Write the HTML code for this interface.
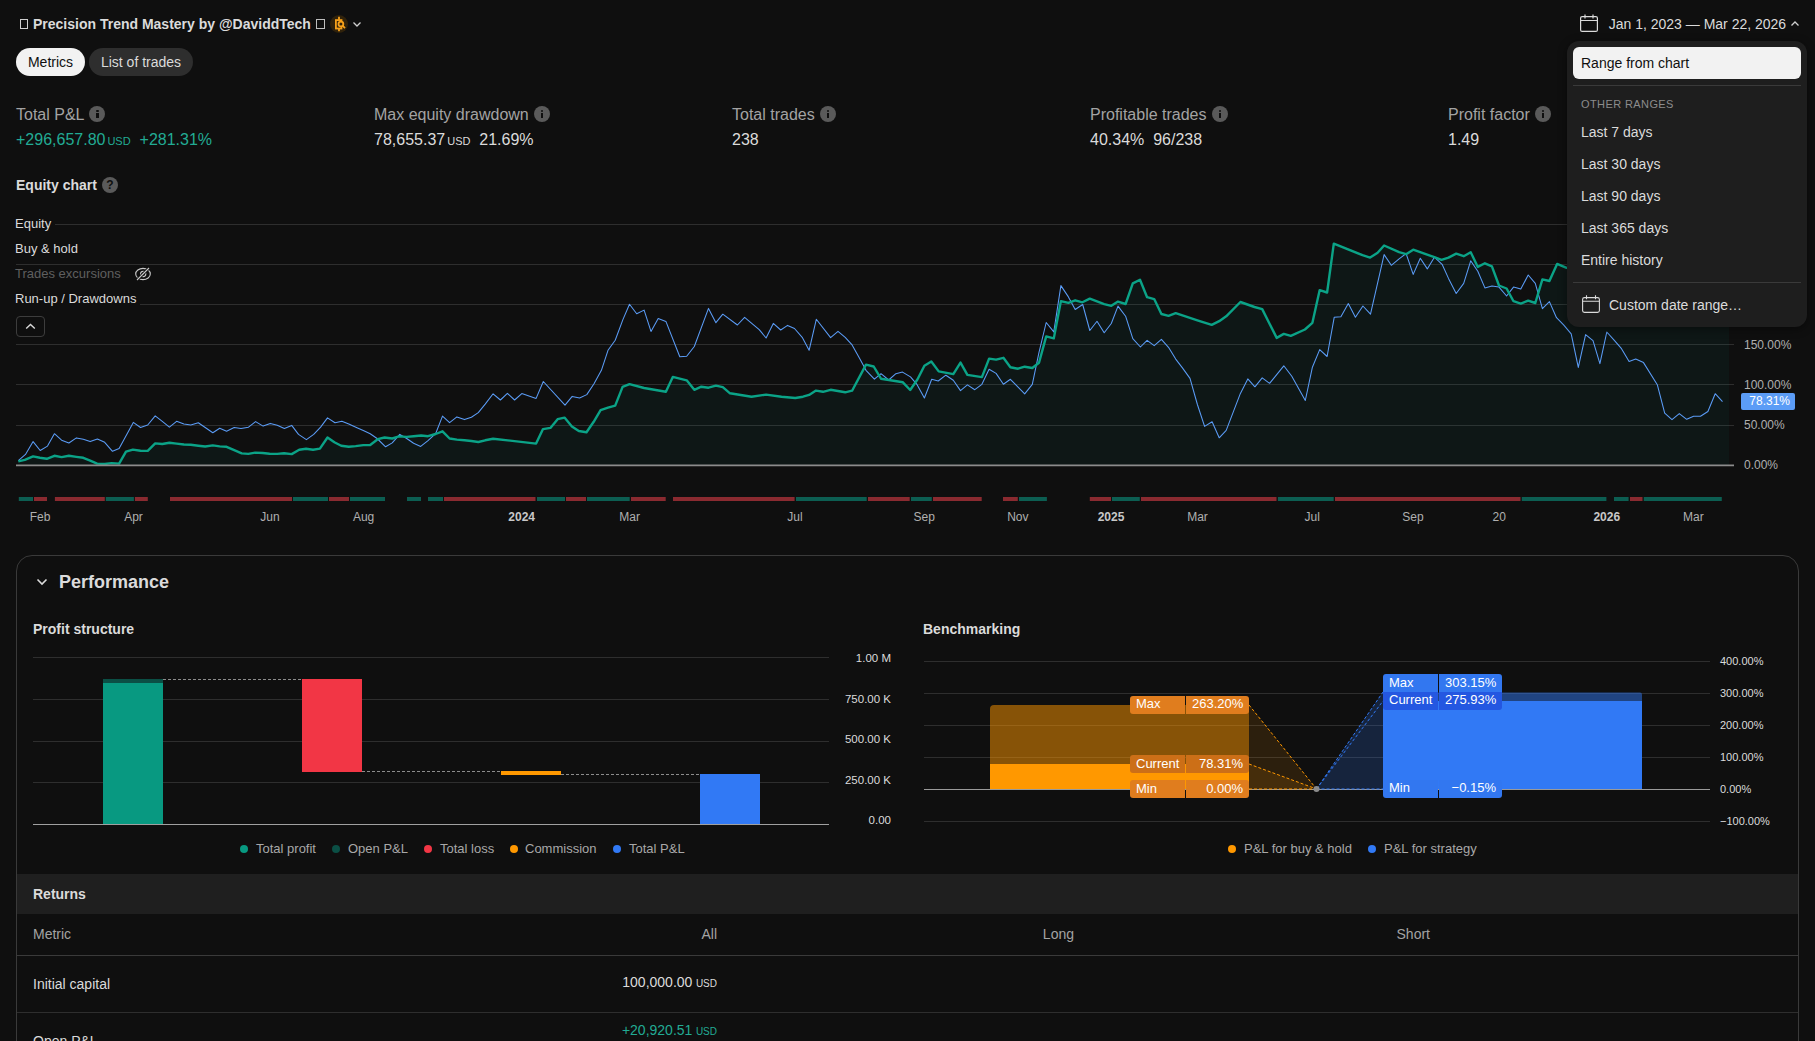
<!DOCTYPE html>
<html><head><meta charset="utf-8">
<style>
*{box-sizing:border-box;margin:0;padding:0}
html,body{width:1815px;height:1041px;overflow:hidden;background:#0f0f0f;font-family:"Liberation Sans",sans-serif;color:#dbdbdb}
.a{position:absolute;white-space:nowrap}
.xl{position:absolute;top:510px;width:80px;text-align:center;font-size:12px;line-height:15px}
.ml{position:absolute;top:105px;font-size:16px;line-height:20px;color:#a3a3a3}
.mv{position:absolute;top:130px;font-size:16px;line-height:20px;color:#dbdbdb}
.usd{font-size:11px;margin-left:2px}
.info{display:inline-block;width:16px;height:16px;border-radius:50%;background:#5a5a5a;vertical-align:-2px;margin-left:5px;position:relative}
.info:before{content:"";position:absolute;left:7px;top:7px;width:2.4px;height:5px;background:#0f0f0f}
.info:after{content:"";position:absolute;left:7px;top:3.5px;width:2.4px;height:2.4px;background:#0f0f0f;border-radius:50%}
.leg{position:absolute;left:15px;font-size:13px;line-height:16px;background:#0f0f0f;padding-right:4px}
.yl{position:absolute;left:1744px;font-size:12px;line-height:14px;color:#b0b0b0}
.dd{position:absolute;left:1567px;top:41px;width:240px;height:286px;background:#1e1e1e;border-radius:12px;box-shadow:0 2px 10px rgba(0,0,0,0.45)}
.di{position:absolute;left:14px;font-size:14px;line-height:18px;color:#dbdbdb}
.pl{position:absolute;font-size:11.5px;line-height:13px;color:#dbdbdb;text-align:right;width:80px}
.lg{position:absolute;top:841px;font-size:13px;line-height:15px;color:#a8a8a8}
.dot{position:absolute;top:845px;width:8px;height:8px;border-radius:50%}
.bl{position:absolute;font-size:13px;line-height:17px;color:#fff;height:17.5px;padding:0 6px}
.bll{position:absolute;left:1720px;font-size:11px;line-height:13px;color:#dbdbdb}
</style></head><body>
<!-- header -->
<div class="a" style="left:20px;top:19px;width:8px;height:10px;border:1px solid #cfcfcf"></div>
<div class="a" style="left:33px;top:16px;font-size:14px;line-height:17px;font-weight:700;color:#dbdbdb">Precision Trend Mastery by @DaviddTech</div>
<div class="a" style="left:316px;top:19px;width:9px;height:10px;border:1px solid #bdbdbd"></div>
<div class="a" style="left:330px;top:15px;width:18px;height:18px;border-radius:50%;background:#30220b"></div>
<svg class="a" style="left:330px;top:15px" width="18" height="18" viewBox="0 0 18 18"><g fill="none" stroke="#f7a11a" stroke-width="1.8"><path d="M9 1.8v3M9 14v2.2"/><rect x="5.9" y="5.1" width="5.6" height="8.4"/><circle cx="10.9" cy="9" r="2.4" fill="#30220b"/><path d="M12.6 10.7l2.4 2.4"/></g></svg>
<svg class="a" style="left:352px;top:19px" width="10" height="10" viewBox="0 0 10 10"><path d="M1.5 3.5l3.5 3.5 3.5-3.5" fill="none" stroke="#cfcfcf" stroke-width="1.3"/></svg>

<div class="a" style="left:16px;top:48px;width:69px;height:28px;border-radius:14px;background:#f2f2f2;color:#0f0f0f;font-size:14px;line-height:28px;text-align:center">Metrics</div>
<div class="a" style="left:89px;top:48px;width:104px;height:28px;border-radius:14px;background:#2e2e2e;color:#dbdbdb;font-size:14px;line-height:28px;text-align:center">List of trades</div>

<!-- date range -->
<svg class="a" style="left:1580px;top:14px" width="18" height="18" viewBox="0 0 18 18"><g fill="none" stroke="#dbdbdb" stroke-width="1.2"><rect x="0.6" y="2.6" width="16.8" height="14.8" rx="1.5"/><path d="M0.6 6.5h16.8M5 0.5v4M13 0.5v4"/></g></svg>
<div class="a" style="left:1608.7px;top:16px;font-size:14px;line-height:17px;color:#dbdbdb">Jan 1, 2023 — Mar 22, 2026</div>
<svg class="a" style="left:1789.7px;top:19px" width="10" height="10" viewBox="0 0 10 10"><path d="M1.5 6.5l3.5-3.5 3.5 3.5" fill="none" stroke="#cfcfcf" stroke-width="1.3"/></svg>

<!-- metrics -->
<div class="ml" style="left:16px">Total P&amp;L<span class="info"></span></div>
<div class="mv" style="left:16px;color:#22ab94">+296,657.80<span class="usd">USD</span>&nbsp;&nbsp;+281.31%</div>
<div class="ml" style="left:374px">Max equity drawdown<span class="info"></span></div>
<div class="mv" style="left:374px">78,655.37<span class="usd">USD</span>&nbsp;&nbsp;21.69%</div>
<div class="ml" style="left:732px">Total trades<span class="info"></span></div>
<div class="mv" style="left:732px">238</div>
<div class="ml" style="left:1090px">Profitable trades<span class="info"></span></div>
<div class="mv" style="left:1090px">40.34%&nbsp;&nbsp;96/238</div>
<div class="ml" style="left:1448px">Profit factor<span class="info"></span></div>
<div class="mv" style="left:1448px">1.49</div>

<div class="a" style="left:16px;top:177px;font-size:14px;line-height:17px;font-weight:700;color:#dbdbdb">Equity chart</div>
<div class="a" style="left:102px;top:177px;width:16px;height:16px;border-radius:50%;background:#5a5a5a;color:#0f0f0f;font-size:12px;font-weight:700;line-height:16px;text-align:center">?</div>

<!-- equity chart -->
<svg width="1815" height="540" style="position:absolute;left:0;top:0">
<line x1="16" y1="224.5" x2="1734" y2="224.5" stroke="#2e2e2e" stroke-width="1"/>
<line x1="16" y1="264.5" x2="1734" y2="264.5" stroke="#2e2e2e" stroke-width="1"/>
<line x1="16" y1="304.5" x2="1734" y2="304.5" stroke="#2e2e2e" stroke-width="1"/>
<line x1="16" y1="344.5" x2="1734" y2="344.5" stroke="#2e2e2e" stroke-width="1"/>
<line x1="16" y1="384.5" x2="1734" y2="384.5" stroke="#2e2e2e" stroke-width="1"/>
<line x1="16" y1="425.5" x2="1734" y2="425.5" stroke="#2e2e2e" stroke-width="1"/>
<polygon points="18.3,465.0 18.3,461.3 24.8,459.9 33.1,456.4 39.9,457.8 46.8,458.8 54.4,455.8 61.6,457.1 68.9,455.8 76.4,456.9 83.3,457.8 90.2,460.6 97.1,463.6 104.7,464.0 111.6,463.1 119.1,463.6 126.0,451.6 132.9,449.6 140.5,450.7 147.7,450.9 155.2,443.4 162.3,444.0 169.4,442.7 176.6,443.6 183.9,444.5 190.8,444.7 198.3,445.7 205.2,446.5 212.8,445.4 219.7,446.4 226.6,446.8 234.2,450.2 241.7,453.4 248.3,453.9 255.2,452.6 262.7,453.0 269.6,453.7 277.2,453.9 284.1,453.3 291.7,454.1 299.2,449.8 306.1,448.8 313.0,449.8 319.9,448.6 327.5,437.5 334.4,442.2 341.2,445.7 348.8,446.8 355.7,446.1 363.3,445.1 370.2,445.0 377.7,439.2 384.6,437.5 392.2,438.5 399.1,436.4 406.7,436.9 413.6,436.2 421.1,435.5 428.0,436.2 435.6,434.0 442.5,431.3 449.6,438.5 456.9,439.6 464.5,440.2 471.4,441.0 478.3,442.0 485.2,440.3 493.1,438.7 536.1,443.6 543.0,429.1 550.4,427.9 557.6,419.2 564.5,417.6 571.9,426.4 578.8,431.0 586.5,432.2 593.7,421.8 600.6,410.2 608.0,407.6 615.2,405.6 622.6,386.9 629.5,384.1 644.1,388.0 665.9,391.8 672.8,376.9 686.7,380.3 694.3,389.8 701.3,386.7 708.5,387.7 715.9,385.7 722.8,387.2 730.0,393.3 751.5,396.7 766.1,394.6 781.5,396.7 795.3,398.0 803.0,396.7 809.1,394.9 816.0,390.6 823.0,391.8 830.6,389.8 845.2,392.3 852.1,390.7 866.0,364.6 873.7,366.5 881.0,378.7 902.9,382.3 910.2,390.0 917.4,379.5 924.4,365.7 931.3,361.5 938.7,371.4 953.3,374.1 960.5,362.6 967.4,374.9 981.9,377.1 989.1,358.6 996.1,359.6 1003.4,357.8 1010.4,367.2 1018.0,368.7 1024.7,366.7 1032.3,368.0 1039.0,362.8 1046.2,336.4 1053.8,338.4 1060.9,301.1 1068.4,302.8 1075.2,300.3 1082.4,302.3 1089.8,298.6 1104.2,304.1 1111.3,305.8 1118.0,301.6 1125.6,304.0 1132.8,283.4 1140.0,279.8 1147.1,297.2 1154.2,299.1 1161.4,314.0 1168.5,315.9 1175.7,313.2 1197.4,320.4 1211.7,324.8 1219.2,321.2 1226.2,316.3 1240.4,302.0 1254.5,307.0 1262.2,309.1 1276.7,337.9 1283.8,333.9 1290.8,335.9 1304.9,329.5 1312.4,322.8 1319.7,290.1 1327.1,292.5 1333.8,243.7 1362.5,255.2 1370.1,257.6 1377.6,252.8 1384.1,245.5 1399.1,252.2 1406.1,254.2 1413.2,249.7 1434.4,257.2 1441.5,259.8 1448.5,257.6 1456.2,253.6 1463.7,256.2 1470.7,252.2 1477.8,266.9 1484.9,263.3 1491.9,266.3 1499.0,285.5 1506.6,288.5 1513.5,301.2 1520.8,303.6 1528.2,300.6 1535.3,303.0 1542.4,279.4 1549.4,281.0 1557.1,263.9 1566.6,267.9 1580.0,270.0 1620.0,258.0 1660.0,252.0 1700.0,246.0 1722.5,240.0 1729.0,240.0 1729.0,465.0" fill="#089981" fill-opacity="0.06"/>
<polyline points="18.3,460.6 25.5,454.4 33.1,441.6 40.2,450.5 47.5,446.1 54.4,433.7 61.6,440.2 68.9,443.0 76.4,437.9 83.3,439.2 90.2,441.6 97.4,439.0 104.7,442.3 112.5,451.3 119.1,448.5 133.3,422.4 140.5,427.5 147.7,425.0 155.2,415.8 162.3,421.3 169.4,427.1 176.6,421.3 183.9,424.1 190.8,425.0 198.3,422.7 205.2,427.5 212.8,432.8 219.7,428.2 226.6,431.2 234.2,427.5 241.0,428.5 248.5,427.2 255.6,421.6 263.1,426.1 270.3,423.4 277.2,425.2 284.4,428.5 291.7,425.4 298.5,434.4 306.4,439.6 313.7,434.4 320.6,427.1 327.5,417.9 335.0,422.7 341.9,421.3 348.8,424.0 356.4,427.5 363.3,430.5 370.2,433.7 377.1,438.5 385.6,446.8 392.2,442.9 399.8,434.4 406.7,438.5 413.6,443.3 420.7,446.4 428.0,440.6 435.6,433.7 442.5,416.1 449.6,422.7 456.9,416.9 464.5,419.6 471.4,417.2 478.3,412.6 485.2,404.1 493.1,393.8 500.4,400.0 507.4,393.3 514.6,400.0 521.8,393.6 536.1,398.4 543.3,381.5 565.0,405.2 572.2,396.4 579.6,398.0 586.8,394.6 594.0,383.8 601.4,370.3 608.0,350.3 615.2,340.3 622.9,319.6 629.5,304.2 636.7,313.7 644.1,310.1 651.0,331.4 658.2,318.5 665.9,321.4 679.8,356.8 686.7,356.2 694.3,346.5 708.5,308.4 715.9,322.7 722.8,314.2 737.4,325.0 744.6,317.3 759.2,329.6 766.1,338.0 773.3,323.4 780.7,330.0 787.6,325.4 794.5,328.5 802.2,337.3 809.1,350.3 816.3,319.3 830.6,337.6 838.0,331.4 845.2,337.3 852.1,344.9 859.8,358.8 866.0,370.3 874.4,379.2 881.0,373.7 888.7,380.0 895.9,373.7 902.5,372.1 910.5,376.9 916.7,384.1 924.4,398.0 931.7,379.2 938.2,381.0 945.9,375.2 953.3,380.3 960.5,390.6 967.4,384.9 974.8,389.7 981.9,384.3 989.1,369.2 996.1,373.4 1003.4,384.3 1010.4,379.3 1024.7,393.9 1032.3,384.3 1039.0,352.4 1046.2,322.5 1053.8,331.9 1060.9,285.6 1068.4,296.9 1075.2,309.5 1082.7,304.5 1089.8,330.5 1097.0,321.3 1104.2,332.7 1111.3,323.5 1118.0,306.1 1125.6,316.2 1132.8,338.6 1140.4,347.0 1147.1,340.3 1154.2,345.7 1161.4,339.3 1168.5,347.3 1175.7,359.1 1182.8,368.4 1190.0,378.4 1197.4,404.5 1204.6,426.4 1212.1,421.7 1219.2,437.8 1226.2,430.4 1240.4,393.4 1247.8,378.9 1254.9,386.8 1262.2,377.9 1269.6,383.3 1283.8,365.8 1291.8,376.3 1305.3,400.5 1312.4,367.2 1319.7,349.6 1327.1,356.5 1334.2,317.3 1340.9,316.7 1348.3,303.6 1355.4,317.3 1362.9,306.0 1370.5,314.1 1384.1,254.6 1391.3,265.3 1399.1,258.8 1406.1,253.6 1413.2,274.4 1420.3,258.2 1427.3,268.9 1434.4,257.2 1442.1,264.3 1448.5,278.4 1456.2,293.5 1463.7,283.4 1470.7,260.8 1477.8,271.3 1484.9,287.9 1491.9,286.1 1499.0,287.1 1506.6,296.0 1513.5,287.1 1520.8,289.1 1528.2,275.0 1535.3,283.4 1542.4,308.7 1549.4,301.6 1556.5,317.7 1563.6,324.8 1571.2,333.9 1578.3,367.4 1585.6,334.6 1593.0,340.6 1599.9,363.6 1606.8,332.0 1614.1,340.1 1621.5,348.7 1629.1,361.4 1635.7,359.1 1643.5,362.6 1657.3,384.7 1664.7,413.2 1672.0,419.6 1679.3,413.6 1686.7,419.3 1693.6,416.2 1700.5,416.3 1707.9,411.5 1715.2,393.7 1722.5,401.6" fill="none" stroke="#5b9cf6" stroke-width="1.05" stroke-linejoin="round"/>
<polyline points="18.3,461.3 24.8,459.9 33.1,456.4 39.9,457.8 46.8,458.8 54.4,455.8 61.6,457.1 68.9,455.8 76.4,456.9 83.3,457.8 90.2,460.6 97.1,463.6 104.7,464.0 111.6,463.1 119.1,463.6 126.0,451.6 132.9,449.6 140.5,450.7 147.7,450.9 155.2,443.4 162.3,444.0 169.4,442.7 176.6,443.6 183.9,444.5 190.8,444.7 198.3,445.7 205.2,446.5 212.8,445.4 219.7,446.4 226.6,446.8 234.2,450.2 241.7,453.4 248.3,453.9 255.2,452.6 262.7,453.0 269.6,453.7 277.2,453.9 284.1,453.3 291.7,454.1 299.2,449.8 306.1,448.8 313.0,449.8 319.9,448.6 327.5,437.5 334.4,442.2 341.2,445.7 348.8,446.8 355.7,446.1 363.3,445.1 370.2,445.0 377.7,439.2 384.6,437.5 392.2,438.5 399.1,436.4 406.7,436.9 413.6,436.2 421.1,435.5 428.0,436.2 435.6,434.0 442.5,431.3 449.6,438.5 456.9,439.6 464.5,440.2 471.4,441.0 478.3,442.0 485.2,440.3 493.1,438.7 536.1,443.6 543.0,429.1 550.4,427.9 557.6,419.2 564.5,417.6 571.9,426.4 578.8,431.0 586.5,432.2 593.7,421.8 600.6,410.2 608.0,407.6 615.2,405.6 622.6,386.9 629.5,384.1 644.1,388.0 665.9,391.8 672.8,376.9 686.7,380.3 694.3,389.8 701.3,386.7 708.5,387.7 715.9,385.7 722.8,387.2 730.0,393.3 751.5,396.7 766.1,394.6 781.5,396.7 795.3,398.0 803.0,396.7 809.1,394.9 816.0,390.6 823.0,391.8 830.6,389.8 845.2,392.3 852.1,390.7 866.0,364.6 873.7,366.5 881.0,378.7 902.9,382.3 910.2,390.0 917.4,379.5 924.4,365.7 931.3,361.5 938.7,371.4 953.3,374.1 960.5,362.6 967.4,374.9 981.9,377.1 989.1,358.6 996.1,359.6 1003.4,357.8 1010.4,367.2 1018.0,368.7 1024.7,366.7 1032.3,368.0 1039.0,362.8 1046.2,336.4 1053.8,338.4 1060.9,301.1 1068.4,302.8 1075.2,300.3 1082.4,302.3 1089.8,298.6 1104.2,304.1 1111.3,305.8 1118.0,301.6 1125.6,304.0 1132.8,283.4 1140.0,279.8 1147.1,297.2 1154.2,299.1 1161.4,314.0 1168.5,315.9 1175.7,313.2 1197.4,320.4 1211.7,324.8 1219.2,321.2 1226.2,316.3 1240.4,302.0 1254.5,307.0 1262.2,309.1 1276.7,337.9 1283.8,333.9 1290.8,335.9 1304.9,329.5 1312.4,322.8 1319.7,290.1 1327.1,292.5 1333.8,243.7 1362.5,255.2 1370.1,257.6 1377.6,252.8 1384.1,245.5 1399.1,252.2 1406.1,254.2 1413.2,249.7 1434.4,257.2 1441.5,259.8 1448.5,257.6 1456.2,253.6 1463.7,256.2 1470.7,252.2 1477.8,266.9 1484.9,263.3 1491.9,266.3 1499.0,285.5 1506.6,288.5 1513.5,301.2 1520.8,303.6 1528.2,300.6 1535.3,303.0 1542.4,279.4 1549.4,281.0 1557.1,263.9 1566.6,267.9 1580.0,270.0 1620.0,258.0 1660.0,252.0 1700.0,246.0 1722.5,240.0" fill="none" stroke="#0ba387" stroke-width="2.4" stroke-linejoin="round"/>
<line x1="16" y1="465.3" x2="1734" y2="465.3" stroke="#8c8c8c" stroke-width="1.8"/>
<rect x="18.8" y="497" width="14.2" height="4" fill="#0c5e52"/>
<rect x="34" y="497" width="13.0" height="4" fill="#8a2a30"/>
<rect x="54.9" y="497" width="49.9" height="4" fill="#8a2a30"/>
<rect x="105.8" y="497" width="28.1" height="4" fill="#0c5e52"/>
<rect x="134.9" y="497" width="12.9" height="4" fill="#8a2a30"/>
<rect x="170" y="497" width="122.0" height="4" fill="#8a2a30"/>
<rect x="293" y="497" width="35.0" height="4" fill="#0c5e52"/>
<rect x="329" y="497" width="20.0" height="4" fill="#8a2a30"/>
<rect x="350" y="497" width="35.0" height="4" fill="#0c5e52"/>
<rect x="407" y="497" width="14.0" height="4" fill="#0c5e52"/>
<rect x="428" y="497" width="15.0" height="4" fill="#0c5e52"/>
<rect x="444" y="497" width="91.5" height="4" fill="#8a2a30"/>
<rect x="537" y="497" width="28.0" height="4" fill="#0c5e52"/>
<rect x="566" y="497" width="20.0" height="4" fill="#8a2a30"/>
<rect x="587" y="497" width="42.7" height="4" fill="#0c5e52"/>
<rect x="631" y="497" width="34.7" height="4" fill="#8a2a30"/>
<rect x="673" y="497" width="121.6" height="4" fill="#8a2a30"/>
<rect x="796" y="497" width="70.7" height="4" fill="#0c5e52"/>
<rect x="868" y="497" width="41.7" height="4" fill="#8a2a30"/>
<rect x="911" y="497" width="20.8" height="4" fill="#0c5e52"/>
<rect x="933" y="497" width="48.7" height="4" fill="#8a2a30"/>
<rect x="1003" y="497" width="14.8" height="4" fill="#8a2a30"/>
<rect x="1019" y="497" width="27.9" height="4" fill="#0c5e52"/>
<rect x="1089.8" y="497" width="21.2" height="4" fill="#8a2a30"/>
<rect x="1112" y="497" width="27.8" height="4" fill="#0c5e52"/>
<rect x="1141" y="497" width="135.5" height="4" fill="#8a2a30"/>
<rect x="1277.9" y="497" width="55.8" height="4" fill="#0c5e52"/>
<rect x="1335" y="497" width="185.5" height="4" fill="#8a2a30"/>
<rect x="1521.8" y="497" width="84.6" height="4" fill="#0c5e52"/>
<rect x="1614" y="497" width="14.6" height="4" fill="#0c5e52"/>
<rect x="1630" y="497" width="12.5" height="4" fill="#8a2a30"/>
<rect x="1643.8" y="497" width="78.0" height="4" fill="#0c5e52"/>
</svg>
<div class="leg" style="top:216px;width:40px">Equity</div>
<div class="leg" style="top:241px;">Buy &amp; hold</div>
<div class="leg" style="top:266px;color:#5f5f5f;width:143px">Trades excursions</div>
<svg class="a" style="left:135px;top:267px" width="17" height="14" viewBox="0 0 17 14"><g fill="none" stroke-width="1.1"><ellipse cx="8" cy="7" rx="7.3" ry="5.6" stroke="#c8c8c8"/><circle cx="8.2" cy="7" r="2.6" stroke="#c8c8c8"/><path d="M2 13L14 1" stroke="#0f0f0f" stroke-width="3"/><path d="M2 13L14 1" stroke="#c8c8c8"/></g></svg>
<div class="leg" style="top:291px;">Run-up / Drawdowns</div>
<div class="a" style="left:16px;top:316px;width:29px;height:21px;border:1px solid #3d3d3d;border-radius:4px"></div>
<svg class="a" style="left:25px;top:322px" width="11" height="8" viewBox="0 0 11 8"><path d="M1.2 6.5l4.3-4 4.3 4" fill="none" stroke="#dbdbdb" stroke-width="1.4"/></svg>
<div class="yl" style="top:338px">150.00%</div>
<div class="yl" style="top:378px">100.00%</div>
<div class="yl" style="top:418px">50.00%</div>
<div class="yl" style="top:458px">0.00%</div>
<div class="a" style="left:1741px;top:393px;width:54px;height:17px;background:#5b9cf6;border-radius:2px;color:#fff;font-size:12px;line-height:17px;text-align:right;padding-right:5px">78.31%</div>
<div class="xl" style="left:0px;font-weight:400;color:#b0b0b0">Feb</div>
<div class="xl" style="left:93.5px;font-weight:400;color:#b0b0b0">Apr</div>
<div class="xl" style="left:230px;font-weight:400;color:#b0b0b0">Jun</div>
<div class="xl" style="left:323.6px;font-weight:400;color:#b0b0b0">Aug</div>
<div class="xl" style="left:481.70000000000005px;font-weight:700;color:#c8c8c8">2024</div>
<div class="xl" style="left:589.7px;font-weight:400;color:#b0b0b0">Mar</div>
<div class="xl" style="left:755px;font-weight:400;color:#b0b0b0">Jul</div>
<div class="xl" style="left:884.2px;font-weight:400;color:#b0b0b0">Sep</div>
<div class="xl" style="left:977.8px;font-weight:400;color:#b0b0b0">Nov</div>
<div class="xl" style="left:1071px;font-weight:700;color:#c8c8c8">2025</div>
<div class="xl" style="left:1157.5px;font-weight:400;color:#b0b0b0">Mar</div>
<div class="xl" style="left:1272.2px;font-weight:400;color:#b0b0b0">Jul</div>
<div class="xl" style="left:1373px;font-weight:400;color:#b0b0b0">Sep</div>
<div class="xl" style="left:1459.3px;font-weight:400;color:#b0b0b0">20</div>
<div class="xl" style="left:1566.8px;font-weight:700;color:#c8c8c8">2026</div>
<div class="xl" style="left:1653.4px;font-weight:400;color:#b0b0b0">Mar</div>

<!-- dropdown -->
<div class="dd">
 <div class="a" style="left:6px;top:6px;width:228px;height:32px;background:#f2f2f2;border-radius:6px"></div>
 <div class="di" style="top:13px;color:#0f0f0f">Range from chart</div>
 <div class="a" style="left:6px;top:44px;width:228px;height:1px;background:#3a3a3a"></div>
 <div class="di" style="top:56px;font-size:11px;line-height:14px;color:#8c8c8c;letter-spacing:0.4px">OTHER RANGES</div>
 <div class="di" style="top:82px">Last 7 days</div>
 <div class="di" style="top:114px">Last 30 days</div>
 <div class="di" style="top:146px">Last 90 days</div>
 <div class="di" style="top:178px">Last 365 days</div>
 <div class="di" style="top:210px">Entire history</div>
 <div class="a" style="left:6px;top:241px;width:228px;height:1px;background:#3a3a3a"></div>
 <svg class="a" style="left:15px;top:254px" width="18" height="18" viewBox="0 0 18 18"><g fill="none" stroke="#dbdbdb" stroke-width="1.1"><rect x="0.6" y="2.6" width="16.8" height="14.8" rx="1.8"/><path d="M0.6 6.2h16.8M4.5 0.3v4M13.5 0.3v4"/></g></svg>
 <div class="di" style="left:42px;top:255px">Custom date range…</div>
</div>

<!-- performance panel -->
<div class="a" style="left:16px;top:555px;width:1783px;height:600px;border:1px solid #3a3a3a;border-radius:16px"></div>
<svg class="a" style="left:36px;top:576px" width="12" height="12" viewBox="0 0 12 12"><path d="M1.5 3.5l4.5 4.5 4.5-4.5" fill="none" stroke="#dbdbdb" stroke-width="1.6"/></svg>
<div class="a" style="left:59px;top:572px;font-size:18px;line-height:21px;font-weight:700;color:#dbdbdb">Performance</div>

<div class="a" style="left:33px;top:621px;font-size:14px;line-height:17px;font-weight:700;color:#dbdbdb">Profit structure</div>
<svg class="a" style="left:0;top:640px" width="900" height="200">
 <g stroke="#2e2e2e" stroke-width="1">
 <line x1="33" y1="17.5" x2="829" y2="17.5"/><line x1="33" y1="59.5" x2="829" y2="59.5"/><line x1="33" y1="101.5" x2="829" y2="101.5"/><line x1="33" y1="142.5" x2="829" y2="142.5"/>
 </g>
 <line x1="33" y1="184.5" x2="829" y2="184.5" stroke="#a0a0a0" stroke-width="1"/>
 <rect x="103" y="39" width="60" height="4" fill="#0b4f45"/>
 <rect x="103" y="43" width="60" height="141" fill="#089981"/>
 <rect x="302" y="39" width="60" height="93" fill="#f23645"/>
 <rect x="501" y="131" width="60" height="4" fill="#ff9800"/>
 <rect x="700" y="134" width="60" height="50" fill="#3179f5"/>
 <g stroke="#8c8c8c" stroke-width="1" stroke-dasharray="3 2">
 <line x1="163" y1="39.5" x2="302" y2="39.5"/><line x1="362" y1="131.5" x2="501" y2="131.5"/><line x1="561" y1="134.5" x2="700" y2="134.5"/>
 </g>
</svg>
<div class="pl" style="left:811px;top:652px">1.00 M</div>
<div class="pl" style="left:811px;top:693px">750.00 K</div>
<div class="pl" style="left:811px;top:733px">500.00 K</div>
<div class="pl" style="left:811px;top:774px">250.00 K</div>
<div class="pl" style="left:811px;top:814px">0.00</div>
<div class="dot" style="left:240px;background:#089981"></div><div class="lg" style="left:256px">Total profit</div>
<div class="dot" style="left:332px;background:#0b4f45"></div><div class="lg" style="left:348px">Open P&amp;L</div>
<div class="dot" style="left:424px;background:#f23645"></div><div class="lg" style="left:440px">Total loss</div>
<div class="dot" style="left:510px;background:#ff9800"></div><div class="lg" style="left:525px">Commission</div>
<div class="dot" style="left:613px;background:#3179f5"></div><div class="lg" style="left:629px">Total P&amp;L</div>

<!-- benchmarking -->
<div class="a" style="left:923px;top:621px;font-size:14px;line-height:17px;font-weight:700;color:#dbdbdb">Benchmarking</div>
<svg class="a" style="left:900px;top:640px" width="820" height="200">
 <g stroke="#2e2e2e" stroke-width="1">
 <line x1="24" y1="21.5" x2="810" y2="21.5"/><line x1="24" y1="53.5" x2="810" y2="53.5"/><line x1="24" y1="85.5" x2="810" y2="85.5"/><line x1="24" y1="117.5" x2="810" y2="117.5"/><line x1="24" y1="181.5" x2="810" y2="181.5"/>
 </g>
 <line x1="24" y1="149.5" x2="810" y2="149.5" stroke="#9a9a9a" stroke-width="1"/>
 <path d="M90 149V69a4 4 0 0 1 4-4H349V149z" fill="#ff9800" fill-opacity="0.5"/>
 <rect x="90" y="124" width="259" height="25" fill="#ff9800"/>
 <polygon points="349,65 416.5,149 349,149" fill="#ff9800" fill-opacity="0.12"/>
 <polygon points="349,124 416.5,149 349,149" fill="#ff9800" fill-opacity="0.12"/>
 <g stroke="#ff9800" stroke-width="1" stroke-dasharray="3 2" fill="none">
 <line x1="349" y1="65" x2="416.5" y2="149"/><line x1="349" y1="124" x2="416.5" y2="149"/><line x1="349" y1="149" x2="416.5" y2="149"/>
 </g>
 <path d="M483 149V52.5H740a2 2 0 0 1 2 2V149z" fill="#3179f5" fill-opacity="0.5"/>
 <rect x="483" y="61" width="259" height="88" fill="#3179f5"/>
 <polygon points="416.5,149 483,52 483,149" fill="#3179f5" fill-opacity="0.2"/>
 <g stroke="#3179f5" stroke-width="1" stroke-dasharray="3 2" fill="none">
 <line x1="416.5" y1="149" x2="483" y2="52"/><line x1="416.5" y1="149" x2="483" y2="61"/><line x1="416.5" y1="149" x2="483" y2="149"/>
 </g>
 <circle cx="416.5" cy="149" r="3" fill="#8c8c8c"/>
</svg>
<!-- orange labels -->
<div class="bl" style="left:1130px;top:696px;width:55px;line-height:16px;background:#e07d1e;border-radius:3px 0 0 3px">Max</div>
<div class="bl" style="left:1186px;top:696px;width:63px;line-height:16px;background:#e07d1e;border-radius:0 3px 3px 0;text-align:right">263.20%</div>
<div class="bl" style="left:1130px;top:755px;width:55px;background:#cc6f17;border-radius:3px 0 0 3px">Current</div>
<div class="bl" style="left:1186px;top:755px;width:63px;background:#cc6f17;border-radius:0 3px 3px 0;text-align:right">78.31%</div>
<div class="bl" style="left:1130px;top:780px;width:55px;background:#e07d1e;border-radius:3px 0 0 3px">Min</div>
<div class="bl" style="left:1186px;top:780px;width:63px;background:#e07d1e;border-radius:0 3px 3px 0;text-align:right">0.00%</div>
<!-- blue labels -->
<div class="bl" style="left:1383px;top:674px;width:55px;background:#3277f0;border-radius:3px 0 0 0">Max</div>
<div class="bl" style="left:1439px;top:674px;width:63px;background:#3277f0;border-radius:0 3px 0 0;text-align:right">303.15%</div>
<div class="bl" style="left:1383px;top:692px;width:55px;line-height:16px;background:#2457e1;border-radius:0 0 0 3px">Current</div>
<div class="bl" style="left:1439px;top:692px;width:63px;line-height:16px;background:#2457e1;border-radius:0 0 3px 0;text-align:right">275.93%</div>
<div class="bl" style="left:1383px;top:780px;width:55px;line-height:16.5px;background:#3277f0;border-radius:3px 0 0 3px">Min</div>
<div class="bl" style="left:1439px;top:780px;width:63px;line-height:16.5px;background:#3277f0;border-radius:0 3px 3px 0;text-align:right">−0.15%</div>
<div class="bll" style="top:655px">400.00%</div>
<div class="bll" style="top:687px">300.00%</div>
<div class="bll" style="top:719px">200.00%</div>
<div class="bll" style="top:751px">100.00%</div>
<div class="bll" style="top:783px">0.00%</div>
<div class="bll" style="top:815px">−100.00%</div>
<div class="dot" style="left:1228px;background:#ff9800"></div><div class="lg" style="left:1244px">P&amp;L for buy &amp; hold</div>
<div class="dot" style="left:1368px;background:#3179f5"></div><div class="lg" style="left:1384px">P&amp;L for strategy</div>

<!-- returns -->
<div class="a" style="left:17px;top:874px;width:1781px;height:40px;background:#1f1f1f"></div>
<div class="a" style="left:33px;top:886px;font-size:14px;line-height:17px;font-weight:700;color:#dbdbdb">Returns</div>
<div class="a" style="left:33px;top:926px;font-size:14px;line-height:17px;color:#a3a3a3">Metric</div>
<div class="a" style="left:617px;top:926px;width:100px;text-align:right;font-size:14px;line-height:17px;color:#a3a3a3">All</div>
<div class="a" style="left:974px;top:926px;width:100px;text-align:right;font-size:14px;line-height:17px;color:#a3a3a3">Long</div>
<div class="a" style="left:1330px;top:926px;width:100px;text-align:right;font-size:14px;line-height:17px;color:#a3a3a3">Short</div>
<div class="a" style="left:17px;top:955px;width:1781px;height:1px;background:#3a3a3a"></div>
<div class="a" style="left:33px;top:976px;font-size:14px;line-height:17px;color:#dbdbdb">Initial capital</div>
<div class="a" style="left:517px;top:974px;width:200px;text-align:right;font-size:14px;line-height:17px;color:#dbdbdb">100,000.00<span class="usd" style="margin-left:3.5px;font-size:10px">USD</span></div>
<div class="a" style="left:17px;top:1012px;width:1781px;height:1px;background:#2e2e2e"></div>
<div class="a" style="left:33px;top:1033px;font-size:14px;line-height:17px;color:#dbdbdb">Open P&amp;L</div>
<div class="a" style="left:517px;top:1022px;width:200px;text-align:right;font-size:14px;line-height:17px;color:#22ab94">+20,920.51<span class="usd" style="margin-left:3.5px;font-size:10px">USD</span></div>
</body></html>
